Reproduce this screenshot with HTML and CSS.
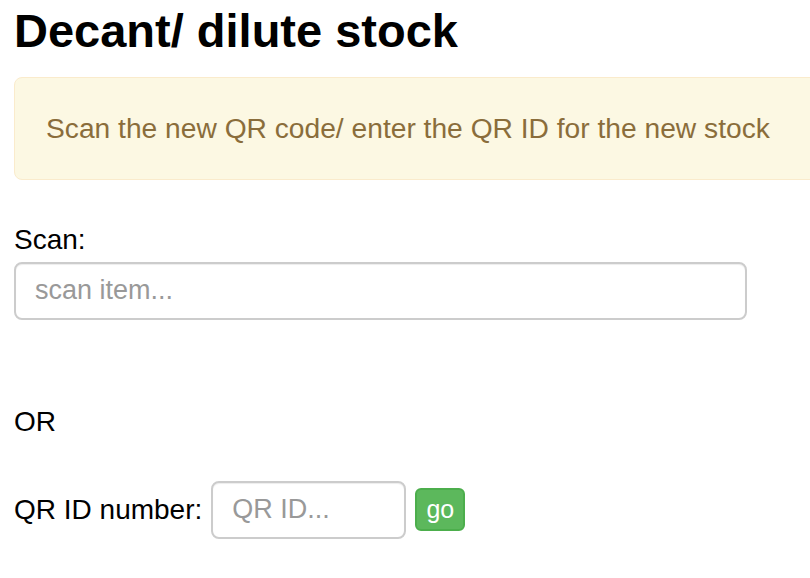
FILE: index.html
```html
<!DOCTYPE html>
<html lang="en">
  <head>
    <meta charset="UTF-8" />
    <meta name="viewport" content="width=device-width, initial-scale=1.0" />
    <title>Decant/ dilute stock</title>
    <link rel="stylesheet" href="styles.css">
  </head>
  <body>
    <div class="page">
      <h1>Decant/ dilute stock</h1>

      <div class="alert">
        Scan the new QR code/ enter the QR ID for the new stock
      </div>

      <label for="scan" class="scan-label">Scan:</label>
      <input type="text" id="scan" class="scan-input" placeholder="scan item..." />

      <p class="or">OR</p>

      <div class="qr-row">
        <label for="qrid">QR ID number:</label>
        <input type="text" id="qrid" class="qr-input" placeholder="QR ID..." />
        <button class="go">go</button>
      </div>
    </div>
  </body>
</html>
```

FILE: styles.css
```css
/* Reset */
* {
  margin: 0;
  padding: 0;
  box-sizing: border-box;
}

body {
  font-family: "Liberation Sans", Arial, sans-serif;
  font-size: 28px;
  line-height: 38px;
  color: #000;
  background-color: #fff;
  overflow: hidden;
}

.page {
  padding: 5px 0 0 14px;
}

h1 {
  font-size: 47px;
  font-weight: bold;
  line-height: 1.1;
  margin-bottom: 20px;
}

/* Warning box, runs past the right edge */
.alert {
  width: 820px;
  padding: 31px;
  background-color: #fcf8e3;
  border: 1px solid #faebcc;
  border-radius: 8px;
  color: #8a6d3b;
  font-size: 28.2px;
  line-height: 39px;
}

.scan-label {
  display: block;
  margin-top: 41px;
  margin-bottom: 3px;
}

input {
  font-family: inherit;
  font-size: 27px;
  height: 58px;
  padding: 0 19px;
  border: 2px solid #ccc;
  border-radius: 8px;
  color: #555;
  background-color: #fff;
  box-shadow: inset 0 1px 1px rgba(0, 0, 0, 0.075);
}

input::placeholder {
  color: #999;
}

.scan-input {
  display: block;
  width: 733px;
}

.or {
  margin-top: 83px;
}

.qr-row {
  display: flex;
  align-items: center;
  gap: 9px;
  margin-top: 40px;
}

.qr-input {
  width: 195px;
}

.go {
  width: 50px;
  height: 43px;
  font-family: inherit;
  font-size: 25px;
  color: #fff;
  background-color: #5cb85c;
  border: 2px solid #4cae4c;
  border-radius: 6px;
  cursor: pointer;
}
```
